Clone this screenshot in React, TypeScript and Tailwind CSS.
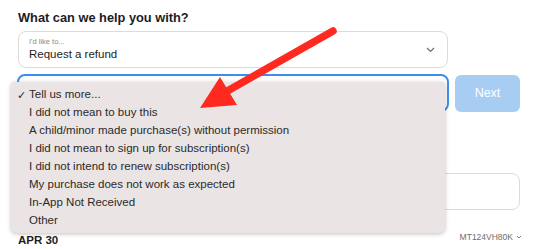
import React from "react";

const items = [
  "Tell us more...",
  "I did not mean to buy this",
  "A child/minor made purchase(s) without permission",
  "I did not mean to sign up for subscription(s)",
  "I did not intend to renew subscription(s)",
  "My purchase does not work as expected",
  "In-App Not Received",
  "Other",
];

export default function App() {
  return (
    <div
      className="relative w-[536px] h-[249px] overflow-hidden bg-white text-[#1d1d1f]"
      style={{ fontFamily: "'Liberation Sans', Arial, sans-serif" }}
    >
      <div className="pl-[18px] pt-[9px] flex flex-col">
        <h1 className="text-[12.8px] leading-[18px] font-bold text-[#1d1d1f]">
          What can we help you with?
        </h1>
        <div className="mt-[4px] w-[430px] h-[37px] rounded-[8px] border border-[#dcdcdc] flex items-center pl-[10px] pr-[12px]">
          <div className="flex-1 flex flex-col">
            <span className="text-[7.5px] leading-[10px] text-[#8a8a8a]">I'd like to...</span>
            <span className="text-[11.5px] leading-[15px] text-[#1d1d1f]">Request a refund</span>
          </div>
          <svg width="9" height="6" viewBox="0 0 9 6" className="mt-[1px]">
            <path d="M1 1l3.5 3.5L8 1" fill="none" stroke="#6e6e6e" strokeWidth="1.2" />
          </svg>
        </div>
        <div className="mt-[6px] flex items-start gap-[6px]">
          <div className="w-[432px] h-[38px] rounded-[8px] border-[2px] border-[#3d8ef0] bg-white -ml-[1px]" />
          <div className="mt-[1px] w-[65px] h-[37px] rounded-[6px] bg-[#a7cdf3] flex items-center justify-center text-white text-[12.5px]">
            Next
          </div>
        </div>
        <div className="mt-[61px] w-[502px] h-[37px] rounded-[8px] border border-[#dcdcdc]" />
        <div className="mt-[17px] flex items-center justify-between w-[504px]">
          <span className="text-[11.5px] leading-[14px] font-bold text-[#1d1d1f] mt-[6px]">APR 30</span>
          <span className="flex items-center gap-[3px] text-[8.5px] text-[#6e6e6e]">
            MT124VH80K
            <svg width="6" height="4" viewBox="0 0 6 4">
              <path d="M1 1l2 2 2-2" fill="none" stroke="#6e6e6e" strokeWidth="0.9" />
            </svg>
          </span>
        </div>
      </div>

      <div className="absolute left-[11px] top-[82px] w-[434px] h-[151px] bg-[#ebe4e4] rounded-b-[6px] rounded-t-[3px] shadow-[0_1px_4px_rgba(0,0,0,0.25)] pt-[4px] flex flex-col">
        {items.map((t, i) => (
          <div key={i} className="h-[18px] flex items-center text-[11.5px] text-[#2a2a2a]">
            <span className="w-[18px] text-right pr-[3px] text-[11px]">{i === 0 ? "✓" : ""}</span>
            <span>{t}</span>
          </div>
        ))}
      </div>

      <svg className="absolute left-0 top-0 pointer-events-none" width="536" height="249" viewBox="0 0 536 249">
        <line x1="333" y1="31" x2="222" y2="94" stroke="#ff2a1f" strokeWidth="7.5" strokeLinecap="round" />
        <polygon points="200,108 220,77 237,105" fill="#ff2a1f" />
      </svg>
    </div>
  );
}
